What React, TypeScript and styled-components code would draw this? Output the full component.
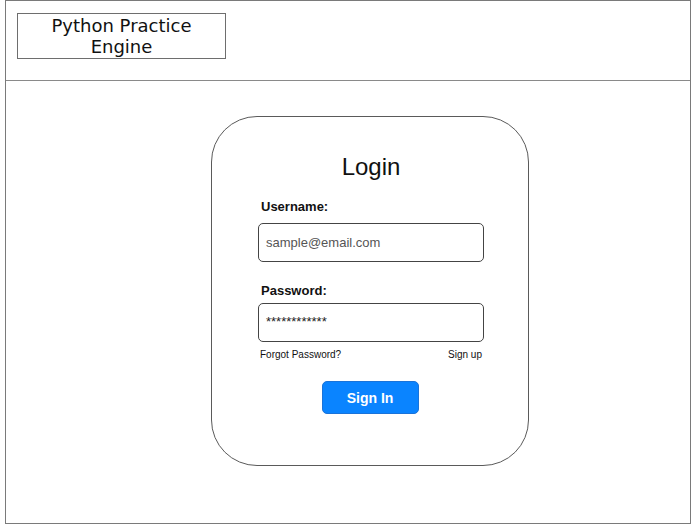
import React from "react";
import styled, { createGlobalStyle } from "styled-components";

const GlobalStyle = createGlobalStyle`
  html, body {
    margin: 0;
    padding: 0;
    background: #ffffff;
  }
  body {
    font-family: "Liberation Sans", Arial, sans-serif;
    color: #111;
  }
`;

export default function App() {
  return (
    <>
      <GlobalStyle />
      <Frame>
        <Header>
          <TitleBox>
            Python Practice
            <br />
            Engine
          </TitleBox>
        </Header>
        <Main>
          <Card>
            <Heading>Login</Heading>
            <Label>Username:</Label>
            <Field $top={8}>
              <Placeholder>sample@email.com</Placeholder>
            </Field>
            <Label $top={21}>Password:</Label>
            <Field $top={4}>
              <Masked>************</Masked>
            </Field>
            <LinksRow>
              <SmallLink>Forgot Password?</SmallLink>
              <SmallLink>Sign up</SmallLink>
            </LinksRow>
            <ButtonRow>
              <SignInButton>Sign In</SignInButton>
            </ButtonRow>
          </Card>
        </Main>
      </Frame>
    </>
  );
}

const Frame = styled.div`
  box-sizing: border-box;
  margin-left: 5px;
  width: 686px;
  height: 524px;
  border: 1.5px solid #7a7a7a;
  display: flex;
  flex-direction: column;
`;

const Header = styled.div`
  box-sizing: border-box;
  height: 80px;
  border-bottom: 1.5px solid #8a8a8a;
  padding-left: 11px;
  padding-top: 12px;
`;

const TitleBox = styled.div`
  box-sizing: border-box;
  width: 209px;
  height: 46px;
  border: 1.5px solid #6e6e6e;
  font-family: "DejaVu Sans", Verdana, sans-serif;
  font-size: 18px;
  line-height: 21px;
  text-align: center;
  color: #111;
  padding-top: 1px;
`;

const Main = styled.div`
  flex: 1;
  padding-left: 205px;
  padding-top: 35px;
`;

const Card = styled.div`
  box-sizing: border-box;
  width: 318px;
  height: 350px;
  border: 1px solid #5a5a5a;
  border-radius: 46px;
  padding: 36px 44px 0 46px;
  display: flex;
  flex-direction: column;
`;

const Heading = styled.div`
  font-size: 24px;
  line-height: 28px;
  text-align: center;
  color: #111;
`;

const Label = styled.div<{ $top?: number }>`
  margin-top: ${(p) => p.$top ?? 18}px;
  padding-left: 3px;
  font-size: 13px;
  font-weight: bold;
  line-height: 16px;
  color: #111;
`;

const Field = styled.div<{ $top: number }>`
  box-sizing: border-box;
  margin-top: ${(p) => p.$top}px;
  width: 226px;
  height: 39px;
  border: 1px solid #444;
  border-radius: 5px;
  padding-left: 7px;
  display: flex;
  align-items: center;
`;

const Placeholder = styled.span`
  font-size: 13px;
  color: #555;
`;

const Masked = styled.span`
  font-size: 13px;
  color: #222;
  padding-bottom: 3px;
`;

const LinksRow = styled.div`
  margin-top: 6px;
  padding-left: 2px;
  width: 222px;
  display: flex;
  justify-content: space-between;
`;

const SmallLink = styled.span`
  font-size: 10px;
  line-height: 13px;
  color: #111;
`;

const ButtonRow = styled.div`
  margin-top: 20px;
  width: 224px;
  display: flex;
  justify-content: center;
`;

const SignInButton = styled.button`
  box-sizing: border-box;
  width: 97px;
  height: 33px;
  border: 1px solid #1a73d9;
  border-radius: 5px;
  background: #0a84ff;
  color: #ffffff;
  font-family: "Liberation Sans", Arial, sans-serif;
  font-size: 14px;
  font-weight: bold;
  padding: 0;
`;
